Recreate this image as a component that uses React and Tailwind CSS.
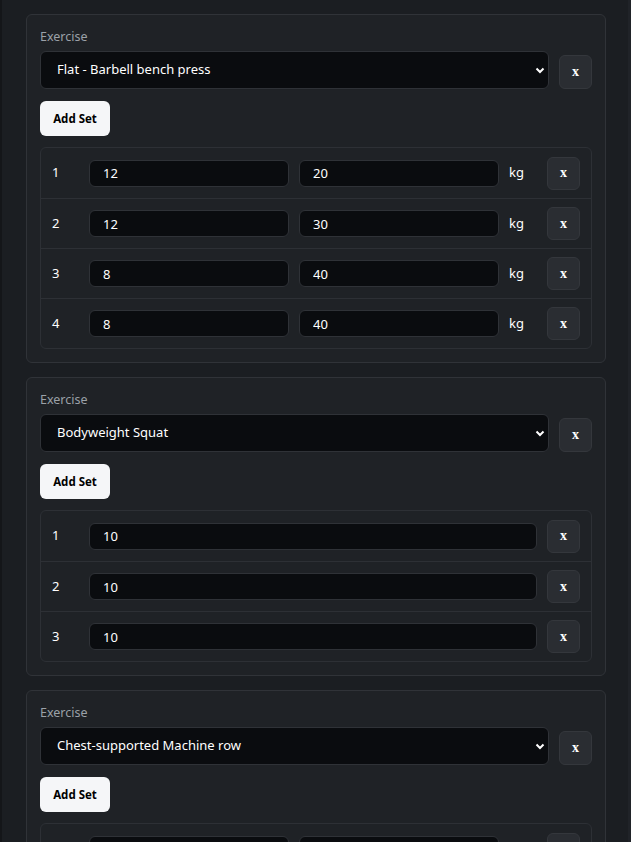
import React from "react";

const font = { fontFamily: '"Noto Sans", "Open Sans", sans-serif' };

const workout = [
  {
    name: "Flat - Barbell bench press",
    weighted: true,
    sets: [
      { reps: "12", weight: "20" },
      { reps: "12", weight: "30" },
      { reps: "8", weight: "40" },
      { reps: "8", weight: "40" },
    ],
  },
  {
    name: "Bodyweight Squat",
    weighted: false,
    sets: [{ reps: "10" }, { reps: "10" }, { reps: "10" }],
  },
  {
    name: "Chest-supported Machine row",
    weighted: true,
    sets: [
      { reps: "12", weight: "40" },
      { reps: "10", weight: "45" },
      { reps: "8", weight: "50" },
    ],
  },
];

const RemoveButton = ({ size = "h-[33px] w-[33px]" }) => (
  <button
    className={`${size} shrink-0 rounded-md border border-[#34373c] bg-[#2a2d32] text-[14px] font-bold leading-none text-white flex items-center justify-center`}
    style={{ fontFamily: '"Liberation Serif", serif' }}
  >
    x
  </button>
);

const Input = ({ value }) => (
  <input
    defaultValue={value}
    className="h-[27px] min-w-0 flex-1 rounded-md border border-[#2f3237] bg-[#0a0c0f] px-[13px] text-[13px] text-white outline-none"
    style={font}
  />
);

const ExerciseCard = ({ exercise }) => (
  <div className="rounded-md border border-[#303338] bg-[#1f2226] px-[13px] pt-[13px] pb-[13px]">
    <div className="flex items-end gap-[10px]">
      <div className="flex-1">
        <div className="mb-[5px] text-[12.5px] leading-[18px] text-[#9ba1a8]" style={font}>
          Exercise
        </div>
        <div className="relative">
          <select
            defaultValue={exercise.name}
            className="h-[38px] w-full appearance-none rounded-md border border-[#2f3237] bg-[#0a0c0f] pl-[16px] text-[13px] text-white outline-none"
            style={font}
          >
            <option>{exercise.name}</option>
          </select>
          <svg
            className="pointer-events-none absolute right-[4px] top-1/2 h-[10px] w-[10px] -translate-y-1/2"
            viewBox="0 0 10 10"
            fill="none"
            stroke="white"
            strokeWidth="2"
          >
            <path d="M1.5 3.5 L5 7 L8.5 3.5" />
          </svg>
        </div>
      </div>
      <RemoveButton size="h-[34px] w-[33px]" />
    </div>

    <button
      className="mt-[12px] h-[35px] w-[70px] rounded-md bg-[#f5f6f8] text-[11.5px] font-bold text-black"
      style={font}
    >
      Add Set
    </button>

    {/* sets table */}
    <div className="mt-[11px] rounded-md border border-[#2d3035] bg-[#1f2226]">
      {exercise.sets.map((set, i) => (
        <div
          key={i}
          className={`flex h-[50px] items-center gap-[10px] pl-[11px] pr-[11px] ${
            i > 0 ? "border-t border-[#2d3035]" : ""
          }`}
        >
          <span className="w-[27px] text-[13px] text-white" style={font}>
            {i + 1}
          </span>
          <Input value={set.reps} />
          {exercise.weighted && (
            <>
              <Input value={set.weight} />
              <span className="w-[28px] text-[13px] text-white" style={font}>
                kg
              </span>
            </>
          )}
          <RemoveButton />
        </div>
      ))}
    </div>
  </div>
);

export default function App() {
  return (
    <div className="min-h-screen border-l-2 border-r-[3px] border-l-[#141619] border-r-[#202328] bg-[#1b1e22] pt-[14px] pl-[24px] pr-[22px] pb-6">
      <div className="flex flex-col gap-[14px]">
        {workout.map((ex, i) => (
          <ExerciseCard key={i} exercise={ex} />
        ))}
      </div>
    </div>
  );
}
